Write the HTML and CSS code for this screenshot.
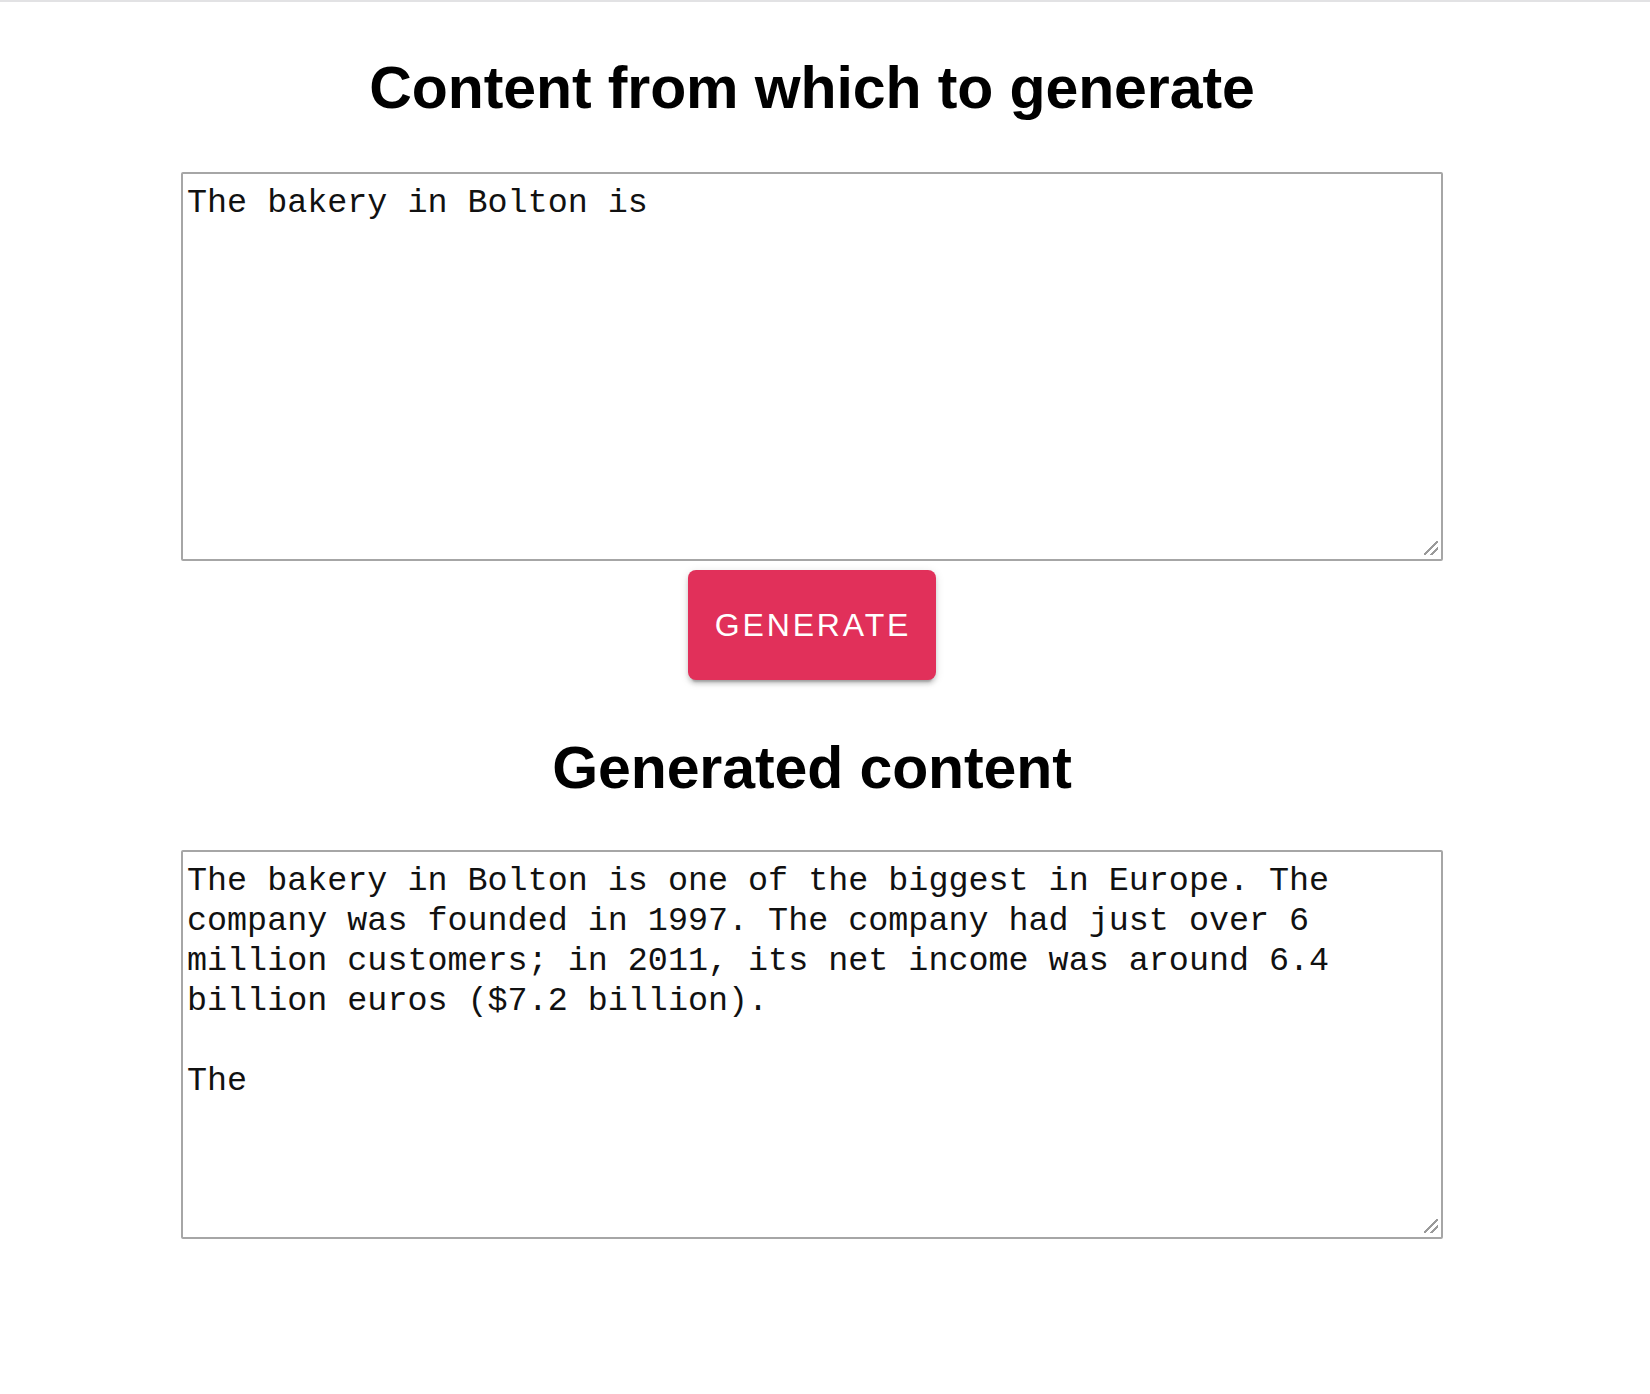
FILE: index.html
```html
<!DOCTYPE html>
<html lang="en">
<head>
<meta charset="utf-8">
<title>Generate</title>
<link rel="stylesheet" href="styles.css">
</head>
<body>
<div class="topbar"></div>
<div class="page">
  <h1 class="title">Content from which to generate</h1>
  <textarea class="box">The bakery in Bolton is</textarea>
  <button class="generate">GENERATE</button>
  <h2 class="title title-2">Generated content</h2>
  <textarea class="box box-out">The bakery in Bolton is one of the biggest in Europe. The company was founded in 1997. The company had just over 6 million customers; in 2011, its net income was around 6.4 billion euros ($7.2 billion).

The</textarea>
</div>
</body>
</html>
```
FILE: styles.css
```css
html, body {
  margin: 0;
  padding: 0;
  background: #ffffff;
}

.topbar {
  height: 2px;
  background: #e2e2e4;
}

.page {
  display: flex;
  flex-direction: column;
  align-items: center;
  padding-right: 26px;
}

.title {
  margin: 53px 0 0 0;
  font-family: "Liberation Sans", Arial, sans-serif;
  font-weight: bold;
  font-size: 59px;
  line-height: 67px;
  color: #000;
  letter-spacing: -0.1px;
}

.title-2 {
  margin-top: 55px;
}

.box {
  box-sizing: border-box;
  width: 1262px;
  height: 389px;
  margin: 50px 0 0 0;
  border: 2px solid #a6a6a6;
  border-radius: 2px;
  padding: 9px 4px 7px 4px;
  font-family: "Liberation Mono", "Courier New", monospace;
  font-size: 33.4px;
  line-height: 40px;
  color: #111;
  background-color: #fff;
  background-image: linear-gradient(to top left, transparent 20%, #9a9a9a 20%, #9a9a9a 29%, transparent 29%, transparent 46%, #9a9a9a 46%, #9a9a9a 55%, transparent 55%);
  background-size: 14px 14px;
  background-repeat: no-repeat;
  background-position: right 3px bottom 4px;
  resize: none;
  outline: none;
}

.box-out {
  margin-top: 48px;
}

.generate {
  margin-top: 9px;
  width: 248px;
  height: 110px;
  border: none;
  border-radius: 8px;
  background: #e1305a;
  color: #fff;
  font-family: "Liberation Sans", Arial, sans-serif;
  font-size: 32px;
  letter-spacing: 2.85px;
  padding: 0 0 0 2px;
  box-shadow: 0 6px 2px -4px rgba(0,0,0,0.2), 0 4px 4px 0 rgba(0,0,0,0.14), 0 2px 10px 0 rgba(0,0,0,0.12);
  cursor: pointer;
}
```
